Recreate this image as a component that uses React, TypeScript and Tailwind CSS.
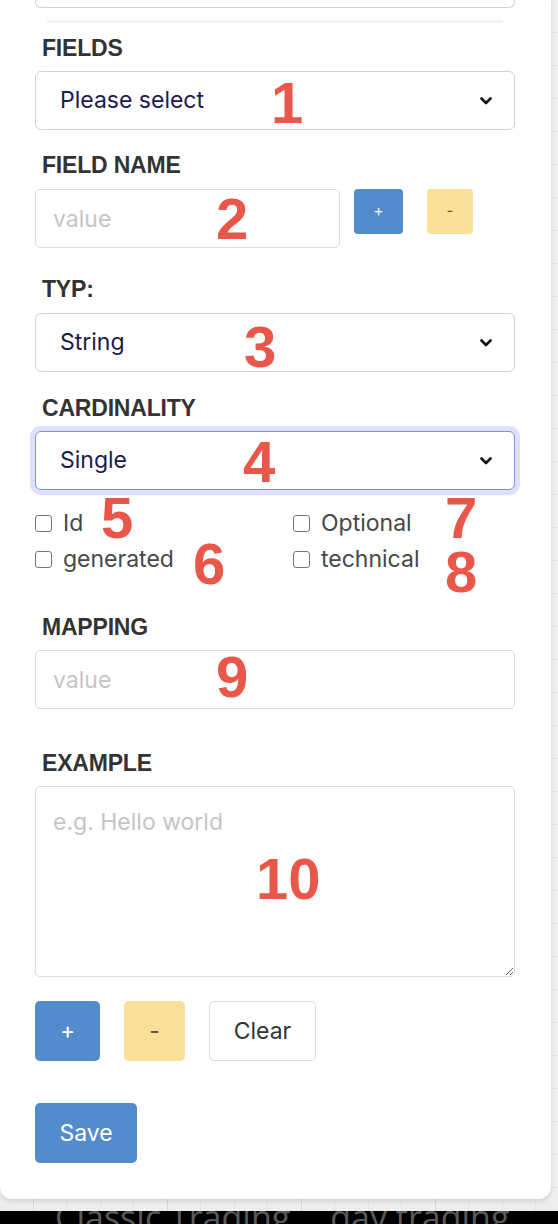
import React from 'react';

const labelCls = "block text-[23px] leading-[28px] font-bold text-[#333333] font-['Liberation_Sans',Arial,sans-serif] tracking-[-0.2px]";
const fieldFont = "font-['Inter','Noto_Sans',sans-serif]";

const Chevron: React.FC = () => (
    <svg className="absolute right-[23px] top-1/2 -translate-y-1/2 pointer-events-none" width="12" height="8" viewBox="0 0 12 8">
        <polyline points="1.5,1.5 6,6 10.5,1.5" fill="none" stroke="#111" strokeWidth="2.6" strokeLinecap="round" strokeLinejoin="round" />
    </svg>
);

interface SelectProps {
    value: string;
    focused?: boolean;
}

const FakeSelect: React.FC<SelectProps> = ({ value, focused }) => (
    <div className="relative">
        <select
            defaultValue={value}
            className={`w-full h-[59px] appearance-none bg-white rounded-[6px] pl-[24px] text-[23px] text-[#1d1b4c] outline-none ${fieldFont} ${
                focused
                    ? 'border border-[#7f8ee6] ring-[5px] ring-[#dde1fb]'
                    : 'border border-[#d2d0da]'
            }`}
        >
            <option>{value}</option>
        </select>
        <Chevron />
    </div>
);

const Check: React.FC<{ label: string }> = ({ label }) => (
    <label className={`flex items-center h-[36px] text-[23px] text-[#474747] ${fieldFont}`}>
        <span className="w-[17px] h-[17px] rounded-[3px] border border-[#777] bg-white mr-[11px] shrink-0" />
        {label}
    </label>
);

const Mark: React.FC<{ n: string; x: number; y: number }> = ({ n, x, y }) => (
    <span
        className="absolute text-[58px] leading-[44px] font-bold text-[#e9574a] font-['Liberation_Sans',Arial,sans-serif] pointer-events-none"
        style={{ left: x, top: y }}
    >
        {n}
    </span>
);

const App: React.FC = () => {
    const gridCells = Array.from({ length: 17 });
    return (
        <div className="w-[558px] h-[1224px] overflow-hidden bg-[#ececec] flex flex-col">
            <div className="flex h-[1199px]">
                {/* panel */}
                <div className="relative w-[551px] h-[1199px] bg-white rounded-b-[12px] shadow-[0_2px_4px_rgba(0,0,0,0.12)] px-[35px] pr-[36px] flex flex-col">
                    <div className="h-[8px] border-x border-b border-[#d2d0da] rounded-b-[6px]" />
                    <div className="mt-[12px] mx-[12px] h-[3px] bg-[#f2f2f2]" />

                    <span className={`${labelCls} mt-[11px] pl-[7px]`}>FIELDS</span>
                    <div className="mt-[9px]">
                        <FakeSelect value="Please select" />
                    </div>

                    <span className={`${labelCls} mt-[21px] pl-[7px]`}>FIELD NAME</span>
                    <div className="mt-[10px] flex items-start">
                        <input
                            placeholder="value"
                            className={`w-[305px] h-[59px] border border-[#dcdcdc] rounded-[5px] pl-[17px] text-[23px] placeholder:text-[#c5c5c5] outline-none ${fieldFont}`}
                        />
                        <button className={`ml-[14px] w-[49px] h-[45px] rounded-[4px] bg-[#548bcd] text-white text-[15px] ${fieldFont}`}>+</button>
                        <button className={`ml-[24px] w-[46px] h-[45px] rounded-[4px] bg-[#fae096] text-[#555] text-[15px] ${fieldFont}`}>-</button>
                    </div>

                    <span className={`${labelCls} mt-[27px] pl-[7px]`}>TYP:</span>
                    <div className="mt-[10px]">
                        <FakeSelect value="String" />
                    </div>

                    <span className={`${labelCls} mt-[22px] pl-[7px]`}>CARDINALITY</span>
                    <div className="mt-[9px]">
                        <FakeSelect value="Single" focused />
                    </div>

                    <div className="mt-[15px] grid grid-cols-[258px_1fr]">
                        <Check label="Id" />
                        <Check label="Optional" />
                        <Check label="generated" />
                        <Check label="technical" />
                    </div>

                    <span className={`${labelCls} mt-[36px] pl-[7px]`}>MAPPING</span>
                    <input
                        placeholder="value"
                        className={`mt-[9px] w-full h-[59px] border border-[#dcdcdc] rounded-[5px] pl-[17px] text-[23px] placeholder:text-[#c5c5c5] outline-none ${fieldFont}`}
                    />

                    <span className={`${labelCls} mt-[40px] pl-[7px]`}>EXAMPLE</span>
                    <textarea
                        placeholder="e.g. Hello world"
                        className={`mt-[9px] w-full h-[191px] border border-[#dcdcdc] rounded-[5px] pl-[17px] pt-[19px] text-[23px] leading-[32px] placeholder:text-[#c5c5c5] outline-none ${fieldFont}`}
                    />

                    <div className="mt-[24px] flex">
                        <button className={`w-[65px] h-[60px] rounded-[5px] bg-[#548bcd] text-white text-[23px] ${fieldFont}`}>+</button>
                        <button className={`ml-[24px] w-[61px] h-[60px] rounded-[5px] bg-[#fae096] text-[#555] text-[23px] ${fieldFont}`}>-</button>
                        <button className={`ml-[24px] w-[107px] h-[60px] rounded-[5px] bg-white border border-[#dcdcdc] text-[#333] text-[23px] ${fieldFont}`}>Clear</button>
                    </div>

                    <button className={`mt-[42px] w-[102px] h-[60px] rounded-[5px] bg-[#548bcd] text-white text-[23px] ${fieldFont}`}>Save</button>

                    {/* annotations */}
                    <Mark n="1" x={271} y={81} />
                    <Mark n="2" x={216} y={197} />
                    <Mark n="3" x={244} y={325} />
                    <Mark n="4" x={243} y={440} />
                    <Mark n="5" x={101} y={496} />
                    <Mark n="6" x={193} y={542} />
                    <Mark n="7" x={445} y={496} />
                    <Mark n="8" x={445} y={550} />
                    <Mark n="9" x={216} y={655} />
                    <Mark n="10" x={256} y={857} />
                </div>
                <div className="flex-1 bg-[repeating-linear-gradient(to_bottom,#efefef_0px,#efefef_32px,#e3e3e3_32px,#e3e3e3_33px)]" />
            </div>
            <div className="h-[12px] flex bg-[#ededed]">
                {gridCells.map((_, i) => (
                    <div key={i} className={`w-[33.5px] shrink-0 border-r ${i % 4 === 0 ? 'border-[#d8d8d8]' : 'border-[#e2e2e2]'}`} />
                ))}
            </div>
            <div className="h-[13px] bg-black overflow-hidden">
                <div className="flex text-[34px] leading-[34px] text-[#5a5a5a] font-['Open_Sans',sans-serif] mt-[-11px] whitespace-nowrap">
                    <span className="ml-[55px]">Classic Trading</span>
                    <span className="ml-[40px]">day trading</span>
                    <span className="ml-[52px]">c</span>
                </div>
            </div>
        </div>
    );
};

export default App;
